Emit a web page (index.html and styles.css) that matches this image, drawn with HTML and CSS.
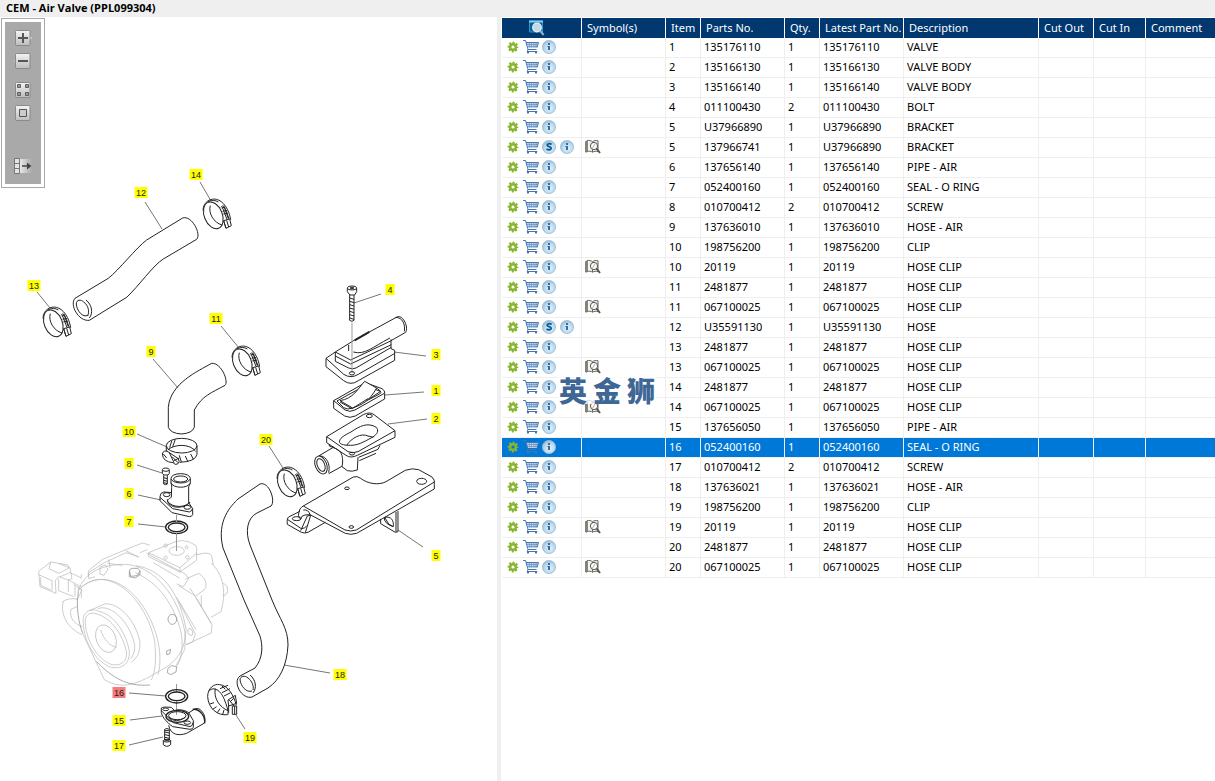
FILE: index.html
```html
<!DOCTYPE html>
<html lang="en">
<head>
<meta charset="utf-8">
<title>CEM - Air Valve (PPL099304)</title>
<link rel="stylesheet" href="styles.css">
</head>
<body>
<svg class="sprite" aria-hidden="true">
  <defs>
    <radialGradient id="disc" cx=".55" cy=".6" r=".6"><stop offset="0" stop-color="#e6f3fb"/><stop offset=".6" stop-color="#bcdcef"/><stop offset="1" stop-color="#94b9d6"/></radialGradient>
    <linearGradient id="plate" x2="0" y2="1"><stop offset="0" stop-color="#f4f4f4"/><stop offset="1" stop-color="#bdbdbd"/></linearGradient>
    <linearGradient id="fade" x2="1"><stop offset="0" stop-color="#e8e8e8"/><stop offset="1" stop-color="#a9a9a9"/></linearGradient>
  </defs>
  <symbol id="gear" viewBox="0 0 16 16"><circle cx="8" cy="8" r="4.400" fill="none" stroke="#86b52e" stroke-width="2" stroke-dasharray="2 1.456" stroke-dashoffset="1"/><circle cx="8" cy="8" r="2.800" fill="none" stroke="#86b52e" stroke-width="2.400"/></symbol>
  <symbol id="cart" viewBox="0 0 16 16"><path d="M3 3h12.500l-1.500 6H5z" fill="#c3d6ec"/><path d="M0 1.500h2.500L5 10.500h8.500M3 3.500h12.500L14 8.500" fill="none" stroke="#4675ad"/><path d="M3.800 5.500H15M4.400 7.500h10.200M6 3.500l.8 5M8.500 3.500v5M11 3.500v5M13.300 3.500l-.5 5" fill="none" stroke="#5c86ba" stroke-width=".6"/><path d="M5 10.500l-.8 2h10" fill="none" stroke="#4675ad"/><circle cx="5" cy="13.600" r="1.100" fill="#4675ad"/><circle cx="13" cy="13.600" r="1.100" fill="#4675ad"/></symbol>
  <symbol id="info" viewBox="0 0 16 16"><circle cx="8" cy="8" r="6.600" fill="url(#disc)" stroke="#9fbdd6" stroke-width=".8"/><path d="M7 4h2v2H7zM6.400 7H9v4H7V8h-.6z" fill="#3b6aa8"/></symbol>
  <symbol id="sub" viewBox="0 0 16 16"><circle cx="8" cy="8" r="6.600" fill="url(#disc)" stroke="#9fbdd6" stroke-width=".8"/><path d="M10.600 5.400C8.800 4.200 5.900 4.600 6.200 6.300c.2 1.600 4 1.200 4 3 0 1.700-2.800 1.900-4.700.7" fill="none" stroke="#0b5a96" stroke-width="1.800"/></symbol>
  <symbol id="book" viewBox="0 0 16 16"><path d="M.7 2.500h1.300V13H.7zM2 1.700c2-.6 4-.2 5.500 1v10.500C6 12 4 12 2 12.600zM7.500 2.700C9 1.500 11 1.300 13 1.700v10.900c-2-.6-4-.4-5.500.6" fill="#f2f2ee" stroke="#66665e"/><circle cx="9" cy="7" r="3.600" fill="#fff" stroke="#55554e"/><path d="M11.500 9.500l3.500 4.500" stroke="#55554e" stroke-width="2"/><path d="M7.500 9l2.500-4" stroke="#aaa"/></symbol>
  <symbol id="preview" viewBox="0 0 16 16"><path d="M.5 1h13v11H.500z" fill="#0d5f9a" stroke="#2f93cc"/><path d="M0 1.500h14" stroke="#7fd0f5" stroke-width="2"/><circle cx="8" cy="7.500" r="4.300" fill="#c3d9e8" stroke="#e9f2f8" stroke-width="1.200"/><path d="M11.300 11l3.400 4" stroke="#8fb0c8" stroke-width="2"/></symbol>
</svg>

<header class="titlebar"><h1>CEM - Air Valve (PPL099304)</h1></header>
<main class="workspace">
  <section class="diagram" aria-label="Exploded diagram">
    <div class="tools" role="toolbar" aria-label="Diagram tools">
      <button type="button" aria-label="Zoom in"><svg viewBox="0 0 18 16"><path d="M15 5l3 3-3 3z" fill="#e4e4e4"/><rect x="1.500" y=".5" width="14.500" height="15" rx="1" fill="url(#plate)" stroke="#8a8a8a"/><path d="M4 8h10M9 3v10" stroke="#555" stroke-width="2"/></svg></button>
      <button type="button" aria-label="Zoom out"><svg viewBox="0 0 18 16"><path d="M3 5L0 8l3 3z" fill="#e4e4e4"/><rect x="1.500" y=".5" width="14.500" height="15" rx="1" fill="url(#plate)" stroke="#8a8a8a"/><path d="M4 8h10" stroke="#555" stroke-width="2"/></svg></button>
      <button type="button" class="gap" aria-label="Fit to window"><svg viewBox="0 0 18 16"><rect x="1.500" y=".5" width="14.500" height="15" rx="1" fill="url(#plate)" stroke="#8a8a8a"/><path d="M3.500 2.500h3v3h-3zM11.500 2.500h3v3h-3zM3.500 10.500h3v3h-3zM11.500 10.500h3v3h-3z" fill="#999" stroke="#5e5e5e"/></svg></button>
      <button type="button" aria-label="Actual size"><svg viewBox="0 0 18 16"><rect x="1.500" y=".5" width="14.500" height="15" rx="1" fill="url(#plate)" stroke="#8a8a8a"/><path d="M5.500 4.500h7v7h-7z" fill="#ccc" stroke="#555"/></svg></button>
      <button type="button" class="gap-large" aria-label="Toggle panel"><svg viewBox="0 0 18 16"><path d="M6 1h12v14H6z" fill="url(#fade)"/><path d="M.5 .5h5v15h-5zM.5 5.500h5M.5 10.500h5" fill="#e4e4e4" stroke="#777"/><path d="M8 8h7" stroke="#444" stroke-width="1.500"/><path d="M13 4.500L17.500 8 13 11.500z" fill="#444"/></svg></button>
    </div>

    <svg class="drawing" viewBox="0 17 497 764" role="img" aria-label="Air valve parts">
      <defs>
        <g id="clamp" fill="none">
          <path d="M-42-10C-42-38-17-48-2-44 20-39 36-13 41 17"/>
          <ellipse cx="-11" cy="4" rx="27" ry="42" transform="rotate(-22 -11 4)"/>
          <path d="M-20-25C-27-3-10 26 15 33M-28-36C-18-42-4-42 4-36M12-20q4-8 10-2l14 36"/>
          <path d="M14-18l10-3M17-8l13-3M19 0l14-3M16-20l14 36M22-20l12 34"/>
          <path d="M20 20L38 15 43 35 27 43z" fill="#fff"/><path d="M29 19l6 20M20 20l7 23"/>
        </g>
      </defs>

      <g class="leaders">
        <path d="M200 182l11 19M145 202l17 27M37 292l13 16M221 326l18 22M381 294l-27 9M426 356l-32-4M424 392l-39 3M427 419l-39 5M269 446l14 22M423 547l-25-17M153 359l25 29M137 434l30 13M137 465l25 8M138 495l23 5M138 524l28 3M129 693l37 3M130 720l32-4M129 745l34-8M245 729l-9-14M330 673l-46-8"/>
      </g>

      <g class="pump" transform="translate(20 520) scale(.3333)">
        <path d="M386 98l78-32q20-9 44 0l19 10q6 8 2 24l-49 43zM386 98v12l94 46 50-35V98M480 143v14"/>
        <ellipse cx="470" cy="93" rx="23" ry="13"/><circle cx="437" cy="77" r="5"/><circle cx="500" cy="82" r="4"/><circle cx="437" cy="113" r="5"/><circle cx="502" cy="112" r="5"/>
        <path d="M205 170v-18l43-34 69-29 50-20 22 6M225 170l-19 6v-18l47-30 65-30 38 12M318 92l38 20M360 98l22-9M240 142l16-8 8 14-12 18-12-4zM262 130l45 6M266 118l4 26"/>
        <path d="M527 105l28-6q16 0 20 8l5 28M575 130c35 35 45 85 28 145l-30 17M608 190q16 4 15 22-3 16-15 14"/>
        <path d="M380 100l116 62 10 14-16 24-20-8M496 178l40-18q18 10 22 30 2 14-6 20l-25 18-50-30M400 128l78 46M510 204l66 110-2 25-76 35M528 232l46 78M544 226v34M470 232l56 110-8 24-20 8M478 245l50 84"/>
        <ellipse cx="511" cy="336" rx="7" ry="11" transform="rotate(-20 511 336)"/>
        <path d="M173 240c-4-45 34-108 143-107 90 5 160 100 178 200 7 50-25 96-76 120-80 50-120 52-165 26L188 340M176 210c20-22 50-40 90-28 66 18 122 100 138 182 6 50 2 94-10 116M184 202c60-50 132-15 178 47 45 60 70 150 52 215M346 158c70 30 118 98 138 182 6 42 0 80-14 100"/>
        <path d="M348 137c78 12 130 78 150 190l-4 62-25 46"/>
        <path d="M190 310c-6-30 18-50 48-36 46 12 80 64 90 120 2 38-22 54-54 48-44-14-82-72-84-132zM196 310c-4-24 12-36 36-28 44 14 76 62 88 114 2 30-18 42-44 38-40-14-76-66-80-124zM208 272l46-20c40-5 90 44 105 110 3 28-4 50-24 64M234 266c40-16 98 44 110 110 2 16-4 30-12 40"/>
        <ellipse cx="258" cy="356" rx="29" ry="43" transform="rotate(-22 258 356)"/><path d="M242 330c10 30 28 48 48 52"/>
        <path d="M56 154l36-28 24 4 34 14 6 32-10 4-30-10-10 12 2 38-48-20zM56 164l40 18v30M62 172v24l30 14M92 126l-5 20 30 14 30-16M116 130l28 5 5 10M116 176v36l45 18M145 180v36M145 180l38 20M120 170l30-12 34 16v-12M160 192l26 18-14 28M165 195v34M175 200v34M184 205v30M130 244c-10 36 10 80 56 100M153 268c-6 26 10 44 34 52M128 245q16-12 44-8M153 268l18-8"/>
        <path class="pump-dark" d="M328 150l8-5h18l6 8-8 14-20 2zM328 155v15l18 4 14-10v-12M172 235c0 38 2 66 16 105M230 425c45 46 90 76 160 70M440 393l12-5-3 14-9 2zM444 445l10-8 16 3-2 16-16 8-10-6z"/>
        <ellipse class="pump-dark" cx="457" cy="298" rx="13" ry="15"/>
      </g>

      <g class="parts">
        <g transform="translate(20 160) scale(.3333)">
          <path d="M165 415L265 355C295 332 350 262 380 240L488 174C515 165 545 222 530 238L430 297C400 315 355 380 320 412L208 481C175 485 148 434 165 415"/>
          <path d="M204 466c-16 8-34-14-35-34 0-14 14-14 22-6 14 10 18 28 12 42M198 420c18 14 22 40 10 54"/>
        </g>
        <use href="#clamp" transform="translate(217 214) scale(.3333)"/>
        <use href="#clamp" transform="translate(57 322) scale(.3333)"/>
        <use href="#clamp" transform="translate(246 361) scale(.3333)"/>
        <use href="#clamp" transform="translate(291 482) scale(.3333)"/>

        <g transform="translate(240 270) scale(.3333)">
          <path d="M286 246l-28 19v25l53 42q22 16 44 0l109-61v-30l-11-5v-28M258 265l53 48q22 14 44 0l108-62M286 246v28l40 20q12 5 22 0l106-62M286 246l46 24 122-58M286 258l46 24 122-58M286 246l58-36 125-68c18-12 38 28 28 45l-44 25M340 246c34 10 56-14 110-42M466 142c24 0 30 24 27 42M326 225v18"/>
          <path class="heavy" d="M344 211l44-25"/>
          <path class="axis" d="M336 158v150"/>
          <ellipse cx="336" cy="310" rx="8" ry="5"/>
          <path d="M322 55v10l8 10h14l6-10V55M329 75v76q7 6 13 0V75M329 84l13 4M329 94l13 4M329 104l13 4M329 114l13 4M329 124l13 4M329 134l13 4M329 144l13 4"/><ellipse cx="336" cy="54" rx="14" ry="6"/><ellipse cx="336" cy="54" rx="6" ry="2"/>
          <path d="M281 392l95-54 50 18q10 6 8 14v17L346 438q-16 8-32 0L281 415zM281 392l34 28q14 8 30 0l88-50M291 393l84-46 46 17q4 4-2 8l-84 43q-12 5-24-2z"/>
          <path d="M300 392c40-6 54-36 74-58l36 20c-22 40-44 50-72 60z" fill="#fff"/><path d="M410 354l12 10-36 24M300 396l36 20 48-30"/>
        </g>

        <g transform="translate(240 400) scale(.3333)">
          <path d="M260 110l110-66q20-10 32 0l63 48v20L352 166q-20 10-34 0L260 128zM260 110l64 45q14 6 30 0L465 92M299 128c-4-12 14-22 34-32 26-18 50-30 76-14 8 10 4 20-12 30-30 16-44 24-66 24-16 0-28-2-32-8zM320 136c14-22 44-38 64-28l16 4"/>
          <ellipse cx="388" cy="48" rx="9" ry="5"/><ellipse cx="336" cy="161" rx="8" ry="4"/>
          <path d="M280 142l-44 26M266 221l40-22M268 132v6l20 8c16 8 20 20 20 40l-2 14 16 12q14 4 30-2l2-38M356 172l58-24 6-12M358 182l50-22"/>
          <ellipse cx="243" cy="195" rx="17" ry="28" transform="rotate(-22 243 195)"/><ellipse cx="243" cy="195" rx="11" ry="20" transform="rotate(-22 243 195)"/><path d="M240 168c20 0 32 26 26 50"/>
          <path d="M190 318L340 231q12-4 22 4c20 16 54 22 76 10l58-34q22-8 40-2l40 22q10 8 7 22v14L350 400q-18 6-34 0L210 344l-15 1q-12 2-13 12-12-6-2-30 4-6 10-9zM190 318l125 72q18 6 34 0L583 246M180 334l-34 17q-6 4-4 22l42 24q10 4 20 0l52-30M182 392l20-44 10-2-16 52M142 358l42 28q10 0 16-8M190 330q16-2 20 14"/>
          <ellipse cx="545" cy="244" rx="15" ry="9"/><ellipse cx="321" cy="265" rx="7" ry="4"/><ellipse cx="334" cy="381" rx="7" ry="4"/><ellipse cx="170" cy="356" rx="13" ry="6"/>
          <path d="M422 357v14l44 26 8-2v-62M468 336v60M433 352q-2 18 26 28M434 352c20-4 28 10 26 28l-14-8z"/>
        </g>

        <g transform="translate(100 330) scale(.3333)">
          <path d="M205 292v-60c6-72 88-108 130-132 30-2 52 56 40 66-40 22-70 32-92 74v52q-6 18-39 20-32-2-39-20z"/>
          <ellipse cx="245" cy="347" rx="46" ry="22"/><path d="M199 347v28M291 347v26q-4 22-52 24M203 360c20-18 66-20 84 4M215 333l-6 20M226 328l-8 22M238 376l6 20M256 378l8 18M272 372l8 16"/>
          <path d="M187 372q4-14 18-6l30 20q6 10-2 16-8 4-14-4-30-2-32-26z" fill="#fff"/><path d="M208 368l14 30M216 380l18 18M222 392l16-8M190 372l10 12"/>
          <path d="M187 420v10l5 5h12l4-5v-10M191 436v26q6 4 11 0v-26M191 443l11 3M191 451l11 3M191 458l11 3"/><ellipse cx="197.500" cy="419" rx="10" ry="5"/>
          <path d="M214 488l-22-2q-12 2-12 14v12l36 36 52 12q8 0 10-6v-18l-12-18M180 502l38 34 50 10q8-2 9-10"/>
          <ellipse cx="200" cy="494" rx="10" ry="6"/><ellipse cx="262" cy="532" rx="10" ry="6"/>
          <path d="M213 447v13q3 4 2 12l-1 30c-8 4-14 10-10 14 14 16 46 18 62 4v-50l5-10v-13z" fill="#fff"/><path d="M202 508c0 30 54 30 68 8M213 458c6 18 50 18 57 2"/>
          <ellipse cx="242" cy="445" rx="29" ry="14" fill="#fff"/><ellipse cx="242" cy="447" rx="21" ry="9"/>
          <ellipse class="ring" cx="230" cy="592" rx="33" ry="19"/><ellipse class="ring" cx="230" cy="592" rx="25" ry="13"/>
        </g>
        <path class="axis" d="M176.500 515v7M176.500 532v19M176.500 684v8M176.500 701v14"/>

        <path d="M244 600L223 548C216 520 232 505 238 499L260 484C269 481 276 501 271 506L257 513C247 518 245 532 250 545L272 600C280 620 288 628 288 645 287 665 280 680 268 688L252 697C242 700 232 682 240 676L255 668C263 658 263 646 260 636L244 600"/>
        <path d="M252 691c-6 2-11-5-12-11 0-4 5-5 8-2 4 3 6 8 5 12M250 675c6 5 7 13 3 18"/>

        <g transform="translate(100 600) scale(.3333)">
          <ellipse class="ring" cx="230" cy="289" rx="33" ry="20"/><ellipse class="ring" cx="230" cy="289" rx="25" ry="13"/>
          <path d="M184 324q4-4 30-2l10 10M184 324v14c4 16 18 30 34 42l52 8q8 0 10-6v-20l-14-24c-14-10-34-10-42-6M184 332l36 36 50 12q8-2 9-12M206 376c6 30 30 32 54 24l52-30M264 340l22-14c20-6 36 30 26 44"/>
          <path class="ring" d="M278 328c22-2 38 20 36 42"/>
          <ellipse class="ring" cx="232" cy="349" rx="34" ry="18"/><ellipse cx="232" cy="347" rx="26" ry="12"/><path d="M206 352q22 20 50 0"/><ellipse cx="197" cy="328" rx="9" ry="4"/><ellipse cx="262" cy="368" rx="10" ry="5"/>
          <path d="M194 389v32h14v-32M194 396l14 3M194 404l14 3M194 412l14 3M190 422v12q10 10 22 0v-12"/><ellipse cx="201" cy="389" rx="7" ry="3"/><ellipse cx="201" cy="422" rx="11" ry="4"/>
          <path d="M323 290c0-26 20-40 36-36 24 2 42 30 50 62M323 290c2 36 30 58 60 54M328 272c14-14 34 0 44 24 8 20 14 36 12 48M346 266c-6 30 14 56 38 66M360 266l24-10M366 278l24-12M372 288l20-10M366 258l10 10M384 300l22-14 4 24-24 8zM386 318v20M390 306l12-12M388 300l14 18"/>
          <path d="M397 318h13v25h-13z" fill="#fff"/><path d="M404 318v24M330 312l12-4M338 328l12-8M352 338l8-12M368 344l4-14"/>
        </g>
      </g>
      <g class="callouts" id="callouts"></g>
    </svg>
  </section>

  <div class="splitter" role="separator" aria-orientation="vertical"></div>

  <section class="list" aria-label="Parts list">
    <table>
      <colgroup><col class="w80"><col class="w84"><col class="w35"><col class="w84"><col class="w35"><col class="w84"><col class="w135"><col class="w55"><col class="w52"><col></colgroup>
      <thead><tr>
        <th scope="col" class="preview"><button type="button" aria-label="Preview"><svg class="icon"><use href="#preview"/></svg></button></th>
        <th scope="col">Symbol(s)</th><th scope="col">Item</th><th scope="col">Parts No.</th><th scope="col">Qty.</th><th scope="col">Latest Part No.</th><th scope="col">Description</th><th scope="col">Cut Out</th><th scope="col">Cut In</th><th scope="col">Comment</th>
      </tr></thead>
      <tbody id="rows"></tbody>
    </table>
    <div class="watermark" lang="zh"><span>英</span><span>金</span><span>狮</span></div>
  </section>
</main>
<script src="script.js"></script>
</body>
</html>
```
FILE: styles.css
```css
* { box-sizing: border-box; }
body {
  margin: 0;
  min-height: 100vh;
  display: flex;
  flex-direction: column;
  background: #fff;
  color: #000;
  font: 11px/16px "Noto Sans", "Open Sans", sans-serif;
}
button { border: 0; padding: 0; background: none; display: block; cursor: pointer; }
svg { display: block; }
.sprite { position: absolute; width: 0; height: 0; }

.titlebar { background: #efefef; padding: 0 6px 2px; }
.titlebar h1 { margin: 0; font: bold 11px/15px "Open Sans", "Noto Sans", sans-serif; }

.workspace {
  flex: 1;
  display: grid;
  grid-template-columns: minmax(0, 497fr) 4px minmax(0, 714fr);
}
.splitter { background: #efefef; }

.diagram { position: relative; }
.drawing { width: 100%; height: auto; }
.tools {
  position: absolute;
  top: 1px;
  left: 1px;
  display: flex;
  flex-direction: column;
  align-items: center;
  gap: 7px;
  width: 44px;
  padding: 11px 8px 13px;
  border: 1px solid #a9a9a9;
  background: #a9a9a9;
  box-shadow: inset 0 0 0 3px #fff;
}
.tools svg { width: 18px; height: 16px; }
.tools .gap { margin-top: 6px; }
.tools .gap-large { margin-top: 30px; }

.leaders { fill: none; stroke: #777; stroke-width: 1; }
.parts { fill: none; stroke: #222; stroke-width: 1; }
.parts g, .parts use { stroke-width: 3; }
.parts .axis { stroke: #999; }
.parts .ring { stroke-width: 4; }
.parts .heavy { stroke-width: 6; }
.pump { fill: none; stroke: #b4b4b4; stroke-width: 2; }
.pump-dark { stroke: #808080; }
.callouts rect { fill: #ff0; }
.callouts .picked rect { fill: #f47c7c; }
.callouts text { font: 9px "Liberation Sans", Arial, sans-serif; text-anchor: middle; fill: #222; }

.list { position: relative; padding: 1px 0 0 1px; }
table { width: 100%; table-layout: fixed; border-collapse: separate; border-spacing: 0; }
.w35 { width: 35px; }
.w52 { width: 52px; }
.w55 { width: 55px; }
.w80 { width: 80px; }
.w84 { width: 84px; }
.w135 { width: 135px; }
th, td { height: 20px; white-space: nowrap; text-align: left; overflow: hidden; }
th {
  padding: 0 0 0 5px;
  background: #00386f;
  color: #fff;
  font-weight: normal;
  border-right: 1px solid #fff;
}
td {
  padding: 1px 0 2px 3px;
  border-right: 1px solid #efefef;
  border-bottom: 1px solid #efefef;
  vertical-align: top;
}
th:last-child, td:last-child { border-right: 0; }
.preview { padding-left: 27px; }
.icon { width: 16px; height: 16px; }
.actions { display: flex; gap: 2px; }
.selected td { background: #0078d7; color: #fff; }

.watermark {
  position: absolute;
  top: 359px;
  left: 56px;
  display: flex;
  gap: 6px;
  padding: 0 2px;
  background: rgba(255, 255, 255, .75);
  color: #3f6796;
  font: 900 28px/28px "Noto Sans CJK SC", sans-serif;
  pointer-events: none;
}
```
FILE: script.js
```js
// item, part number, quantity, latest part number, description, flags (S = substitute, B = has symbol)
const parts = [
  [1, "135176110", 1, "135176110", "VALVE", ""],
  [2, "135166130", 1, "135166130", "VALVE BODY", ""],
  [3, "135166140", 1, "135166140", "VALVE BODY", ""],
  [4, "011100430", 2, "011100430", "BOLT", ""],
  [5, "U37966890", 1, "U37966890", "BRACKET", ""],
  [5, "137966741", 1, "U37966890", "BRACKET", "SB"],
  [6, "137656140", 1, "137656140", "PIPE - AIR", ""],
  [7, "052400160", 1, "052400160", "SEAL - O RING", ""],
  [8, "010700412", 2, "010700412", "SCREW", ""],
  [9, "137636010", 1, "137636010", "HOSE - AIR", ""],
  [10, "198756200", 1, "198756200", "CLIP", ""],
  [10, "20119", 1, "20119", "HOSE CLIP", "B"],
  [11, "2481877", 1, "2481877", "HOSE CLIP", ""],
  [11, "067100025", 1, "067100025", "HOSE CLIP", "B"],
  [12, "U35591130", 1, "U35591130", "HOSE", "S"],
  [13, "2481877", 1, "2481877", "HOSE CLIP", ""],
  [13, "067100025", 1, "067100025", "HOSE CLIP", "B"],
  [14, "2481877", 1, "2481877", "HOSE CLIP", ""],
  [14, "067100025", 1, "067100025", "HOSE CLIP", "B"],
  [15, "137656050", 1, "137656050", "PIPE - AIR", ""],
  [16, "052400160", 1, "052400160", "SEAL - O RING", ""],
  [17, "010700412", 2, "010700412", "SCREW", ""],
  [18, "137636021", 1, "137636021", "HOSE - AIR", ""],
  [19, "198756200", 1, "198756200", "CLIP", ""],
  [19, "20119", 1, "20119", "HOSE CLIP", "B"],
  [20, "2481877", 1, "2481877", "HOSE CLIP", ""],
  [20, "067100025", 1, "067100025", "HOSE CLIP", "B"]
];
const selectedItem = 16;

const iconButton = (id, label) =>
  `<button type="button" aria-label="${label}"><svg class="icon"><use href="#${id}"/></svg></button>`;

document.getElementById("rows").innerHTML = parts.map(([item, no, qty, latest, text, flags]) => `
  <tr class="${item === selectedItem ? "selected" : ""}">
    <td><div class="actions">${iconButton("gear", "Options")}${iconButton("cart", "Add to cart")}${
      flags.includes("S") ? iconButton("sub", "Substitutes") : ""}${iconButton("info", "Information")}</div></td>
    <td>${flags.includes("B") ? iconButton("book", "Notes") : ""}</td>
    <td>${item}</td><td>${no}</td><td>${qty}</td><td>${latest}</td><td>${text}</td>
    <td></td><td></td><td></td>
  </tr>`).join("");

// number, centre x, centre y in drawing units
const callouts = [
  [14, 196, 175], [12, 141, 193], [13, 34, 286], [11, 216, 319], [4, 390, 290],
  [9, 151, 352], [3, 436, 355], [1, 436, 391], [2, 436, 419], [10, 129, 432],
  [20, 266, 440], [8, 129, 464], [6, 129, 494], [7, 129, 522], [5, 436, 556],
  [16, 119, 693], [18, 340, 675], [15, 119, 721], [17, 119, 746], [19, 250, 738]
];
document.getElementById("callouts").innerHTML = callouts.map(([n, x, y]) => {
  const w = n > 9 ? 13 : 9;
  return `<g class="${n === selectedItem ? "picked" : ""}"><rect x="${x - w / 2}" y="${y - 6}" width="${w}" height="11"/><text x="${x}" y="${y + 3}">${n}</text></g>`;
}).join("");
```
